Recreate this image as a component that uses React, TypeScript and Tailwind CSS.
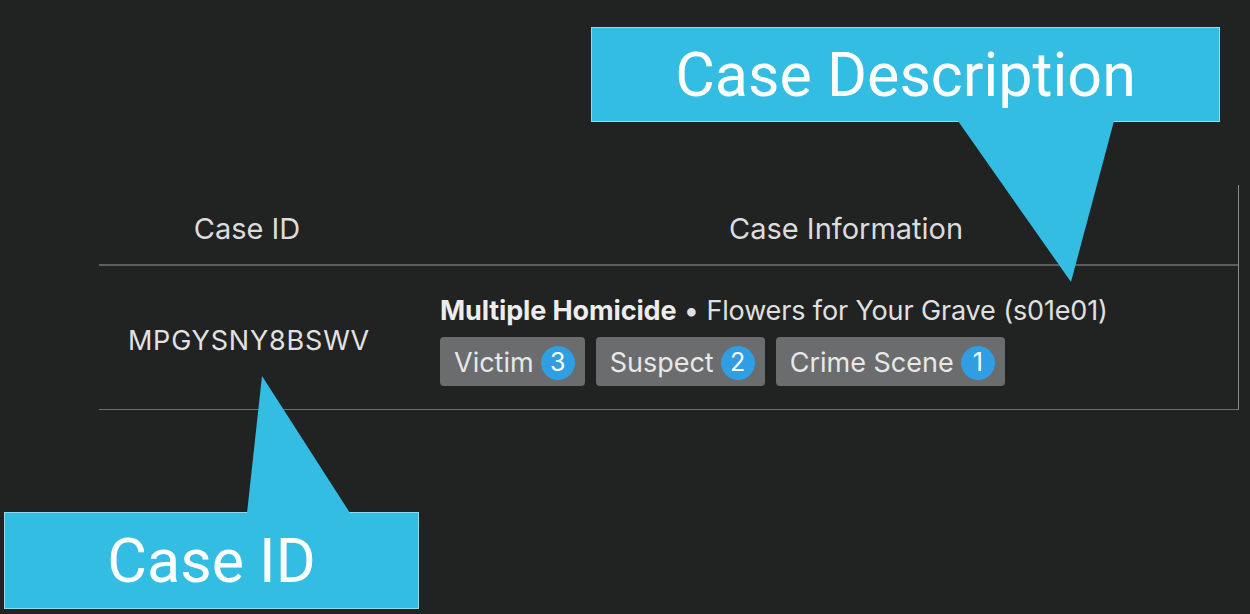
import * as React from "react";

const TAGS = [
  { label: "Victim", count: 3 },
  { label: "Suspect", count: 2 },
  { label: "Crime Scene", count: 1 },
];

export default function App() {
  return (
    <div className="relative h-[614px] w-[1250px] overflow-hidden bg-[#212222] font-['Inter',sans-serif]">
      <div className="pl-[99px] pt-[185px]">
        <div className="w-[1140px] border-r border-[#8a8a8a]">
          <div className="grid h-[81px] grid-cols-[300px_1fr] items-center border-b-2 border-[#5c5d5d] pt-[8px] text-[29px] text-[#dcdcdc]">
            <div className="pr-[4px] text-center">Case ID</div>
            <div className="pl-[330px]">Case Information</div>
          </div>
          <div className="grid h-[144px] grid-cols-[300px_1fr] items-center border-b border-[#6e6e6e]">
            <div className="pt-[8px] text-center text-[27px] tracking-[0.03em] text-[#e2e2e2]">
              MPGYSNY8BSWV
            </div>
            <div className="pl-[41px] pt-[6px]">
              <div className="text-[27px] leading-8 tracking-[-0.005em] text-[#e0e0e0]">
                <span className="font-bold text-[#ededed]">Multiple Homicide</span>
                <span> • Flowers for Your Grave (s01e01)</span>
              </div>
              <div className="mt-[10px] flex gap-[11px]">
                {TAGS.map((t) => (
                  <Tag key={t.label} label={t.label} count={t.count} />
                ))}
              </div>
            </div>
          </div>
        </div>
      </div>

      {/* callouts */}
      <Callout className="left-[591px] top-[27px] h-[95px] w-[629px]" text="Case Description" />
      <Callout className="left-[4px] top-[512px] h-[97px] w-[415px]" text="Case ID" />
      <svg className="pointer-events-none absolute left-0 top-0" width="1250" height="614">
        <polygon points="958,121 1114,121 1071,282" fill="#34bde2" />
        <polygon points="247,513 350,513 262,376" fill="#34bde2" />
      </svg>
    </div>
  );
}

function Tag({ label, count }: { label: string; count: number }) {
  return (
    <div className="flex h-[49px] items-center gap-[7px] rounded-[4px] bg-[#6a6c6d] pl-[14px] pr-[10px] pt-[3px] text-[27px] text-[#e8e8e8]">
      <span>{label}</span>
      <span className="flex h-[34px] w-[34px] items-center justify-center rounded-full bg-[#2f9ee2] text-[25px] text-white">
        {count}
      </span>
    </div>
  );
}

function Callout({ className, text }: { className: string; text: string }) {
  return (
    <div
      className={`absolute flex items-center justify-center border border-[#8fdcf2] bg-[#34bde2] pt-[2px] font-['Roboto',sans-serif] text-[61px] font-normal text-white ${className}`}
    >
      {text}
    </div>
  );
}
